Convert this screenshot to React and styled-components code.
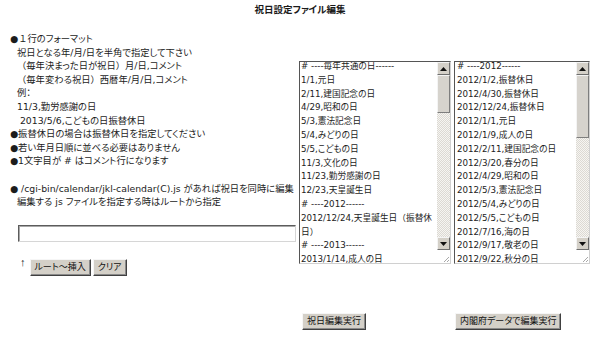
import React from 'react';
import styled, { createGlobalStyle } from 'styled-components';

const GlobalStyle = createGlobalStyle`
  html, body { margin: 0; padding: 0; background: #fff; }
  body {
    font-family: "DejaVu Sans", "Noto Sans CJK JP", sans-serif;
    color: #1c1c1c;
    font-feature-settings: "palt";
    text-spacing-trim: space-all;
  }
`;

const Page = styled.div`
  width: 600px;
  height: 337px;
  overflow: hidden;
  box-sizing: border-box;
  padding: 3px 0 0 10px;
`;

const Title = styled.h1`
  margin: 0;
  padding-right: 10px;
  font-size: 9.5px;
  line-height: 13px;
  font-weight: bold;
  text-align: center;
  color: #1a1a1a;
`;

const Layout = styled.div`
  display: grid;
  grid-template-columns: 286px 152px 136px;
  column-gap: 3px;
  row-gap: 33px;
  margin-top: 16px;
  align-items: start;
`;

const Notes = styled.div`
  font-size: 9.3px;
  line-height: 13.6px;
`;

const Note = styled.div`
  padding-left: ${p => (p.$indent ? 7 : 0)}px;
  min-height: 13.6px;
  white-space: nowrap;
`;

const FullWidth = styled.span`
  font-feature-settings: normal;
`;

const Jp = ({ text }) =>
  text.split(/([（）１])/).map((part, i) =>
    /^[（）１]$/.test(part) ? <FullWidth key={i}>{part}</FullWidth> : part
  );

const PathInput = styled.input`
  display: block;
  box-sizing: border-box;
  margin: 16px 0 0 8px;
  width: 278px;
  height: 17px;
  border: 1px solid;
  border-color: #5c5c5c #d6d6d6 #d6d6d6 #5c5c5c;
  box-shadow: inset 1px 1px 0 #a8a8a8;
  background: #fff;
  padding: 0 2px;
`;

const ToolRow = styled.div`
  display: flex;
  align-items: flex-start;
  gap: 2px;
  margin: 17px 0 0 10px;
`;

const UpMark = styled.span`
  font-family: "Liberation Sans", sans-serif;
  font-size: 11px;
  line-height: 8px;
  margin: -1px 2px 0 0;
  color: #222;
`;

const Button = styled.button`
  font-family: "DejaVu Sans", "Noto Sans CJK JP", sans-serif;
  font-feature-settings: "palt";
  font-size: 9px;
  line-height: 1;
  height: 17px;
  padding: 0 4px;
  margin: 0;
  background: #d4d0c8;
  color: #111;
  border: 1px solid;
  border-color: #f6f6f6 #404040 #404040 #f6f6f6;
  box-shadow: inset -1px -1px 0 #8a8a8a;
  cursor: pointer;
`;

const ActionCell = styled.div`
  padding-left: ${p => p.$offset}px;
`;

const Field = styled.div`
  margin-top: 29px;
  height: 203px;
  box-sizing: border-box;
  display: flex;
  border: 1px solid;
  border-color: #555 #d0d0d0 #d0d0d0 #555;
  background: #fff;
`;

const FieldText = styled.div`
  flex: 1;
  min-width: 0;
  overflow: hidden;
  padding-left: ${p => p.$pad}px;
  font-size: 8.7px;
  line-height: 13.8px;
  color: #1c1c1c;
`;

const FieldLines = styled.div`
  margin-top: -2px;
`;

const FieldLine = styled.div`
  white-space: nowrap;
`;

const Side = styled.div`
  width: 13px;
  display: flex;
  flex-direction: column;
`;

const Track = styled.div`
  flex: 1;
  background-color: #eceae6;
  background-image: repeating-conic-gradient(#dcd9d3 0 25%, #f6f5f2 0 50%);
  background-size: 2px 2px;
`;

const Thumb = styled.div`
  box-sizing: border-box;
  background: #d6d3cd;
  border: 1px solid;
  border-color: #f4f4f4 #7e7e7e #7e7e7e #f4f4f4;
`;

const ArrowButton = styled.div`
  box-sizing: border-box;
  height: 13px;
  background: #d4d0c8;
  border: 1px solid;
  border-color: #f4f4f4 #6e6e6e #6e6e6e #f4f4f4;
  display: flex;
  align-items: center;
  justify-content: center;
`;

const Corner = styled.div`
  height: 13px;
  display: flex;
  align-items: flex-end;
  justify-content: flex-end;
  background: #fff;
`;

const Arrow = ({ down }) => (
  <svg width="7" height="4" viewBox="0 0 7 4">
    <polygon points={down ? '0,0 7,0 3.5,4' : '0,4 7,4 3.5,0'} fill="#111" />
  </svg>
);

const Grip = () => (
  <svg width="8" height="8" viewBox="0 0 8 8">
    <line x1="7" y1="2" x2="2" y2="7" stroke="#a8a8a8" strokeWidth="1" />
    <line x1="7" y1="5" x2="5" y2="7" stroke="#a8a8a8" strokeWidth="1" />
  </svg>
);

const ScrollField = ({ lines, thumb, pad }) => (
  <Field>
    <FieldText $pad={pad}>
      <FieldLines>
        {lines.map((l, i) => (
          <FieldLine key={i}><Jp text={l} /></FieldLine>
        ))}
      </FieldLines>
    </FieldText>
    <Side>
      <ArrowButton><Arrow /></ArrowButton>
      <Track>
        <Thumb style={{ height: thumb }} />
      </Track>
      <ArrowButton><Arrow down /></ArrowButton>
      <Corner><Grip /></Corner>
    </Side>
  </Field>
);

const commonDays = [
  '# ----毎年共通の日------',
  '1/1,元日',
  '2/11,建国記念の日',
  '4/29,昭和の日',
  '5/3,憲法記念日',
  '5/4,みどりの日',
  '5/5,こどもの日',
  '11/3,文化の日',
  '11/23,勤労感謝の日',
  '12/23,天皇誕生日',
  '# ----2012------',
  '2012/12/24,天皇誕生日（振替休',
  '日）',
  '# ----2013------',
  '2013/1/14,成人の日',
];

const cabinetDays = [
  '# ----2012------',
  '2012/1/2,振替休日',
  '2012/4/30,振替休日',
  '2012/12/24,振替休日',
  '2012/1/1,元日',
  '2012/1/9,成人の日',
  '2012/2/11,建国記念の日',
  '2012/3/20,春分の日',
  '2012/4/29,昭和の日',
  '2012/5/3,憲法記念日',
  '2012/5/4,みどりの日',
  '2012/5/5,こどもの日',
  '2012/7/16,海の日',
  '2012/9/17,敬老の日',
  '2012/9/22,秋分の日',
];

const notes = [
  ['●１行のフォーマット', false],
  ['祝日となる年/月/日を半角で指定して下さい', true],
  ['（毎年決まった日が祝日）月/日,コメント', true],
  ['（毎年変わる祝日）西暦年/月/日,コメント', true],
  ['例：', true],
  ['11/3,勤労感謝の日', true],
  ['\u00a02013/5/6,こどもの日振替休日', true],
  ['●振替休日の場合は振替休日を指定してください', false],
  ['●若い年月日順に並べる必要はありません', false],
  ['●1文字目が # はコメント行になります', false],
  ['', false],
  ['● /cgi-bin/calendar/jkl-calendar(C).js があれば祝日を同時に編集', false],
  ['編集する js ファイルを指定する時はルートから指定', true],
];

export default function App() {
  return (
    <Page>
      <GlobalStyle />
      <Title>祝日設定ファイル編集</Title>
      <Layout>
        <div>
          <Notes>
            {notes.map(([t, indent], i) => (
              <Note key={i} $indent={indent}><Jp text={t} /></Note>
            ))}
          </Notes>
          <PathInput type="text" />
          <ToolRow>
            <UpMark>↑</UpMark>
            <Button>ルート〜挿入</Button>
            <Button>クリア</Button>
          </ToolRow>
        </div>
        <ScrollField lines={commonDays} thumb={38} pad={1} />
        <ScrollField lines={cabinetDays} thumb={63} pad={2} />
        <div />
        <ActionCell $offset={3}>
          <Button>祝日編集実行</Button>
        </ActionCell>
        <ActionCell $offset={1}>
          <Button>内閣府データで編集実行</Button>
        </ActionCell>
      </Layout>
    </Page>
  );
}
